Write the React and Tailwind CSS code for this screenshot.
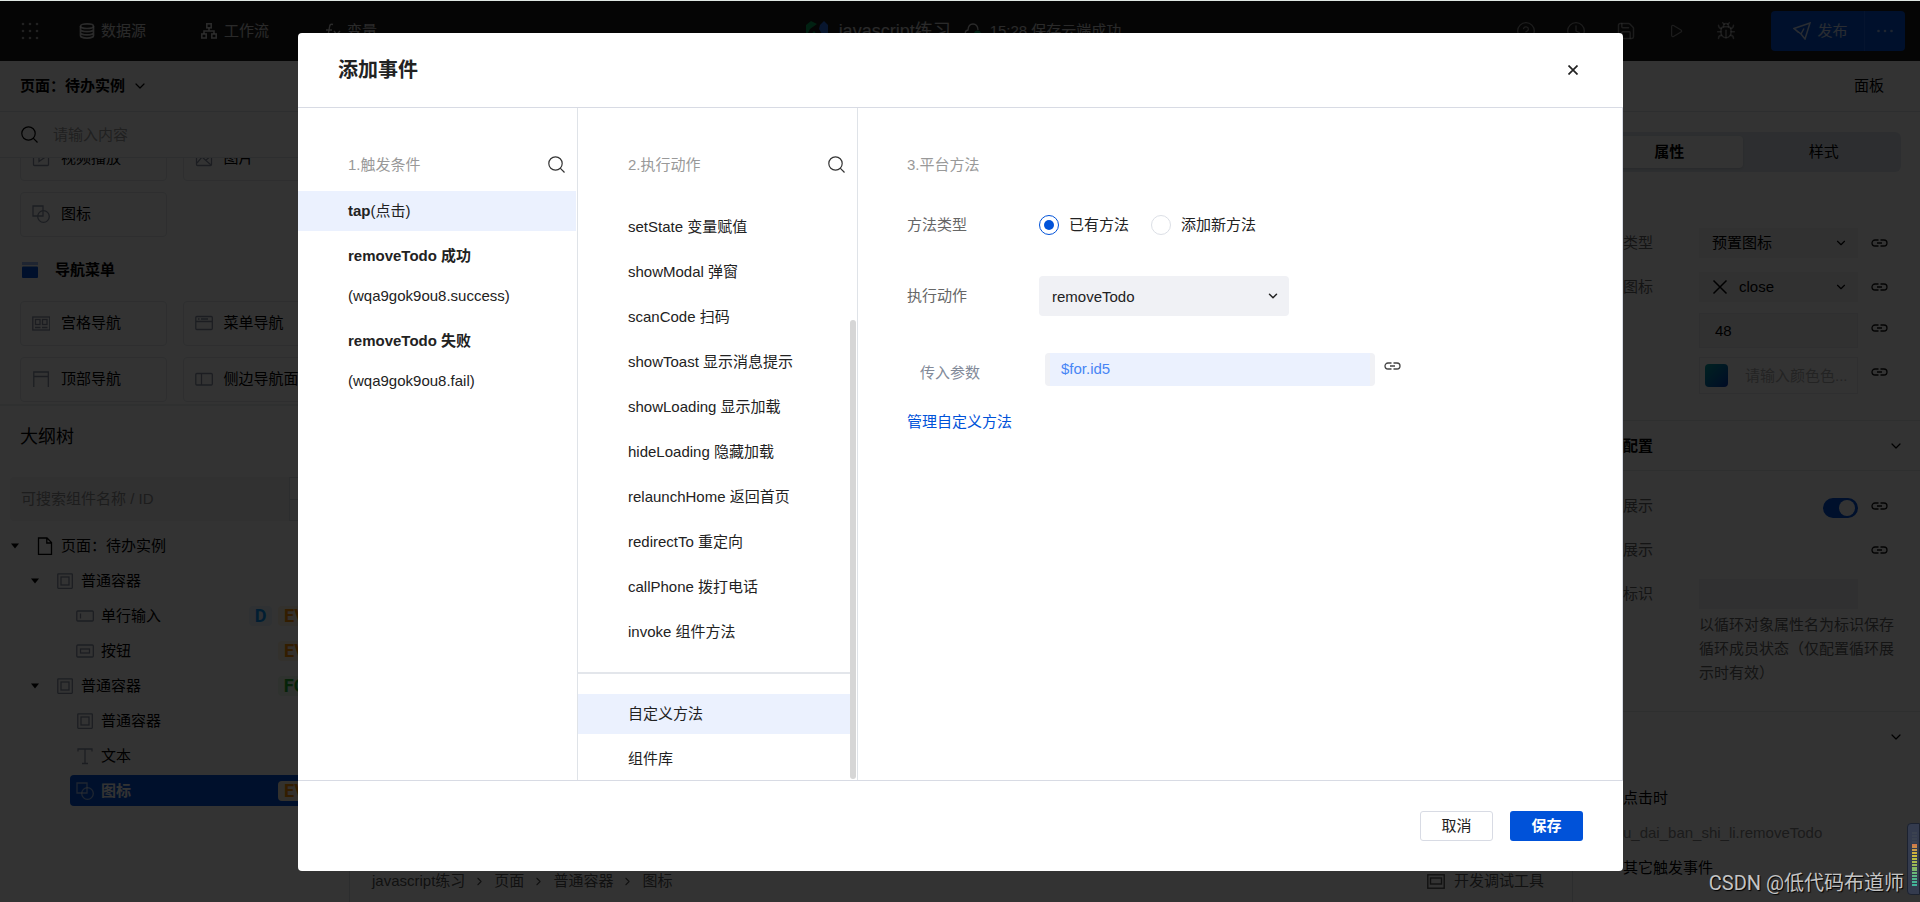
import React from "react";
import { Bug, ChevronDown, ChevronRight, CircleHelp, Clock, Play, Save } from "lucide-react";

function SearchIcon({ className }) {
  return (
    <svg viewBox="0 0 17 17" fill="none" stroke="currentColor" strokeWidth="1.2" className={className}>
      <circle cx="7.5" cy="7.5" r="6.7" />
      <path d="M12.2 12.2 16.5 16.5" />
    </svg>
  );
}

function LinkIcon({ className }) {
  return (
    <svg viewBox="0 0 17 8" fill="none" stroke="currentColor" strokeWidth="1.3" className={className}>
      <path d="M7.500 1H4a3 3 0 0 0 0 6h3.500M9.500 1H13a3 3 0 0 1 0 6H9.500M6 4h5" />
    </svg>
  );
}

function ShapesIcon({ className }) {
  return (
    <svg viewBox="0 0 18 18" fill="none" stroke="currentColor" strokeWidth="1.3" className={className}>
      <path d="M6 11H1V1h10v4" />
      <path d="M11 5v6H6" />
      <circle cx="11.5" cy="11.5" r="5.8" />
    </svg>
  );
}

const glyphs = {
  video: (
    <>
      <rect x="1.5" y="1.5" width="15" height="15" rx="1" />
      <path d="M7 5.5v7l5-3.5z" />
    </>
  ),
  image: (
    <>
      <rect x="1.5" y="1.5" width="15" height="15" rx="1" />
      <path d="m2 14 5-6 9 8M11 11l5-4" />
    </>
  ),
  grid: (
    <>
      <rect x="0.8" y="3" width="17" height="13" />
      <rect x="3.5" y="5.5" width="4.5" height="5" />
      <rect x="10.5" y="5.5" width="4.5" height="5" />
      <path d="M3 13.5h5.5M10 13.5h5.5" />
    </>
  ),
  menu: (
    <>
      <rect x="0.8" y="2.5" width="16.5" height="13" rx="1" />
      <path d="M1 7.5h16M3 5h1.5M6 5h7" />
    </>
  ),
  top: <path d="M1.8 17V2h14.5v15M2 6.5h14" />,
  side: (
    <>
      <rect x="0.8" y="3.5" width="16.5" height="11.5" rx="1" />
      <path d="M6.5 4v11" />
    </>
  ),
  page: <path d="M2.5 1h8.5l4.5 4.5V17.3h-13zM10.800 1v5h4.700" />,
  box: (
    <>
      <rect x="1.8" y="1.8" width="14.5" height="14.5" rx="0.5" />
      <rect x="5" y="5" width="8" height="8" />
    </>
  ),
  input: (
    <>
      <rect x="0.8" y="4" width="16.5" height="10" rx="1" />
      <path d="M4.500 6.500v5" />
    </>
  ),
  button: (
    <>
      <rect x="0.8" y="3" width="16.5" height="12" rx="1" />
      <rect x="4.5" y="7" width="9" height="4" />
    </>
  ),
  text: <path d="M2 4.500V2h14v2.500M9 2v14.500M6 16.500h6" />,
};

function Glyph({ name, className }) {
  if (name === "shapes") return <ShapesIcon className={className} />;
  return (
    <svg viewBox="0 0 18 18" fill="none" stroke="currentColor" strokeWidth="1.3" className={className}>
      {glyphs[name]}
    </svg>
  );
}

function TopBar() {
  return (
    <header className="flex h-[60px] shrink-0 items-center bg-[#191919] text-white/80">
      <nav className="flex flex-1 items-center pl-[21px]">
        <button type="button" aria-label="应用" className="mr-10">
          <svg viewBox="0 0 18 18" className="size-[18px] fill-white/60">
            {[2, 9, 16].map((y) => [2, 9, 16].map((x) => <circle key={`${x}-${y}`} cx={x} cy={y} r="1.3" />))}
          </svg>
        </button>
        <div className="flex items-center gap-[55px]">
          <a href="#data" className="flex items-center gap-1.5">
            <svg viewBox="0 0 16 16" fill="none" stroke="currentColor" strokeWidth="1.7" className="size-4">
              <ellipse cx="8" cy="3.2" rx="6.5" ry="2.3" />
              <path d="M1.500 3.200v9.600c0 1.200 3 2.300 6.500 2.300s6.500-1.100 6.500-2.300V3.200M1.500 6.500c0 1.200 3 2.200 6.500 2.200s6.500-1 6.500-2.200M1.500 9.700c0 1.200 3 2.200 6.500 2.200s6.500-1 6.500-2.200" />
            </svg>
            数据源
          </a>
          <a href="#flow" className="flex items-center gap-[7px]">
            <svg viewBox="0 0 16 16" fill="none" stroke="currentColor" strokeWidth="1.6" className="size-4">
              <rect x="5.8" y="0.8" width="4.4" height="4" />
              <rect x="0.8" y="11" width="4.4" height="4" />
              <rect x="10.8" y="11" width="4.4" height="4" />
              <path d="M8 5v3M3 11V8h10v3" />
            </svg>
            工作流
          </a>
          <a href="#vars" className="flex items-center gap-1.5">
            <svg viewBox="0 0 17 17" fill="none" stroke="currentColor" strokeWidth="1.4" className="size-[17px]">
              <path d="M9 1.500C6.500.5 5.800 2 5.500 4L4 13c-.3 2-1.500 3-3.500 2.500M2 7h6M10 8l5.500 7M16 8l-6.500 7" />
            </svg>
            变量
          </a>
        </div>
      </nav>
      <div className="flex items-center">
        <svg viewBox="0 0 24 20" className="mr-2.5 h-5 w-6">
          <path d="M1 4 6 0l6 3-7 5-4 8z" fill="#07a35a" />
          <path d="M15 4l4-4 4 4v12l-6-3-3-5z" fill="#2b6de8" />
          <path d="M3 17l6-7 6 7-6 3z" fill="#07a35a" />
        </svg>
        <span className="text-lg leading-6">javascript练习</span>
        <svg viewBox="0 0 18 16" fill="none" stroke="currentColor" strokeWidth="1.3" className="mr-2 ml-[13px] h-4 w-[18px]">
          <path d="M4.500 13.500C0 13 .5 7.500 4 7c.5-8 9.500-8 10 0" />
          <circle cx="13.5" cy="11" r="3.5" fill="#0aa56a" stroke="none" />
        </svg>
        <span>15:28 保存云端成功</span>
      </div>
      <div className="flex flex-1 items-center justify-end gap-[30px] pr-[15px] text-white/50">
        <button type="button" aria-label="帮助"><CircleHelp className="size-5" strokeWidth={1.6} /></button>
        <button type="button" aria-label="历史"><Clock className="size-5" strokeWidth={1.6} /></button>
        <button type="button" aria-label="保存应用"><Save className="size-5" strokeWidth={1.8} /></button>
        <button type="button" aria-label="预览"><Play className="size-5 scale-75" strokeWidth={2} /></button>
        <button type="button" aria-label="调试"><Bug className="size-5" strokeWidth={1.8} /></button>
        <div className="ml-[5px] flex h-10 rounded bg-[#0052d9] text-white/80">
          <button type="button" className="flex w-[94px] items-center justify-center gap-1.5 border-r border-[#1a67ea] pl-1.5">
            <svg viewBox="0 0 18 18" fill="none" stroke="currentColor" strokeWidth="1.5" className="size-[18px]">
              <path d="M1 6.500 17 1l-5 16-4-5zM5.500 10.500 1 6.500M8 12l3-5.500" />
            </svg>
            发布
          </button>
          <button type="button" aria-label="更多" className="flex w-10 items-center justify-center text-white/60">
            <svg viewBox="0 0 16 4" className="h-1 w-4 fill-current">
              <circle cx="1.5" cy="2" r="1.3" />
              <circle cx="8" cy="2" r="1.3" />
              <circle cx="14.5" cy="2" r="1.3" />
            </svg>
          </button>
        </div>
      </div>
    </header>
  );
}

function ComponentCard({ icon, label }) {
  return (
    <button type="button" className="flex h-[45px] items-center gap-[11px] overflow-hidden rounded border border-[#e3e6eb] pb-px pl-[11px] whitespace-nowrap">
      <Glyph name={icon} className="size-[18px] shrink-0 text-[#8a93a6]" />
      {label}
    </button>
  );
}

const tagStyles = {
  D: "w-[23px] bg-[#eaf4ff] text-[#0594fa]",
  EV: "w-[34px] bg-[#fff3e0] text-[#ff9000]",
  FO: "w-[34px] bg-[#e8f8ea] text-[#22b030]",
};

function Tag({ name }) {
  return (
    <span className={`flex h-5 items-center justify-center rounded font-[Roboto] text-lg leading-5 font-bold ${tagStyles[name]}`}>
      {name}
    </span>
  );
}

const tree = [
  { label: "页面：待办实例", icon: "page", indent: "pl-[10px]", open: true, tags: [] },
  { label: "普通容器", icon: "box", indent: "pl-[30px]", open: true, tags: [] },
  { label: "单行输入", icon: "input", indent: "pl-[50px]", tags: ["D", "EV"] },
  { label: "按钮", icon: "button", indent: "pl-[50px]", tags: ["EV"] },
  { label: "普通容器", icon: "box", indent: "pl-[30px]", open: true, tags: ["FO"] },
  { label: "普通容器", icon: "box", indent: "pl-[50px]", tags: [] },
  { label: "文本", icon: "text", indent: "pl-[50px]", tags: [] },
];

function LeftPanel() {
  return (
    <aside className="flex w-[350px] shrink-0 flex-col border-r border-[#dcdfe6] bg-white">
      <div className="flex h-[51px] shrink-0 items-center gap-[7px] border-b border-[#dfe3e8] px-5 font-bold">
        页面：待办实例
        <ChevronDown className="size-4" strokeWidth={1.8} />
      </div>
      <label className="flex h-[46px] shrink-0 items-center gap-[15px] border-b border-[#dfe3e8] px-[21px]">
        <SearchIcon className="size-[17px] shrink-0" />
        <input type="text" placeholder="请输入内容" className="min-w-0 flex-1 outline-none placeholder:text-[#a0a0a0]" />
      </label>
      <div className="flex h-[244px] shrink-0 flex-col justify-end overflow-hidden px-5">
        <div className="grid shrink-0 grid-cols-2 gap-x-4 gap-y-[11px]">
          <ComponentCard icon="video" label="视频播放" />
          <ComponentCard icon="image" label="图片" />
          <ComponentCard icon="shapes" label="图标" />
        </div>
        <div className="flex h-16 shrink-0 items-center gap-[17px] pt-0.5 pl-0.5 font-bold">
          <svg viewBox="0 0 16 16" className="size-4">
            <path d="M0 0h16v3H0z" fill="#9bb9f5" />
            <rect y="4.5" width="16" height="11.5" rx="1" fill="#0052d9" />
          </svg>
          导航菜单
        </div>
        <div className="grid shrink-0 grid-cols-2 gap-x-4 gap-y-[11px]">
          <ComponentCard icon="grid" label="宫格导航" />
          <ComponentCard icon="menu" label="菜单导航" />
          <ComponentCard icon="top" label="顶部导航" />
          <ComponentCard icon="side" label="侧边导航面板" />
        </div>
      </div>
      <div className="mt-0.5 h-0.5 shrink-0 bg-[#eaedf1]" />
      <h2 className="flex h-[61px] shrink-0 items-center px-5 text-lg">大纲树</h2>
      <div className="mt-2.5 mr-8 ml-2.5 flex h-11 shrink-0">
        <input
          type="text"
          aria-label="搜索组件"
          placeholder="可搜索组件名称 / ID"
          className="min-w-0 flex-1 rounded-l bg-[#f3f4f6] px-[11px] outline-none placeholder:text-[#8f8f8f]"
        />
        <div className="flex w-7 flex-col border border-[#dcdfe6]">
          <button type="button" aria-label="上一个" className="flex-1 border-b border-[#dcdfe6]" />
          <button type="button" aria-label="下一个" className="flex-1" />
        </div>
      </div>
      <ul className="mt-[7px]">
        {tree.map((node, i) => (
          <li key={i} className={`flex h-[35px] items-center pr-[37px] ${node.indent}`}>
            <span className="flex w-[25px]">
              {node.open && (
                <svg viewBox="0 0 10 6" className="h-1.5 w-2.5">
                  <path d="M1 .5h8L5 5.500z" />
                </svg>
              )}
            </span>
            <span className="mr-1.5 flex w-5 justify-center">
              <Glyph name={node.icon} className={node.icon === "page" ? "size-[18px]" : "size-[18px] text-[#8a93a6]"} />
            </span>
            {node.label}
            <span className="ml-auto flex gap-1.5">
              {node.tags.map((t) => (
                <Tag key={t} name={t} />
              ))}
            </span>
          </li>
        ))}
        <li className="mt-0.5 mr-2.5 ml-[70px] flex h-[31px] items-center rounded-sm bg-[#0052d9] pr-[27px] pl-[6px] font-bold text-white">
          <ShapesIcon className="mr-[7px] size-[18px] text-white/60" />
          图标
          <span className="ml-auto">
            <Tag name="EV" />
          </span>
        </li>
      </ul>
    </aside>
  );
}

function Canvas() {
  return (
    <main className="flex min-w-0 flex-1 flex-col justify-end bg-white">
      <footer className="flex h-[42px] items-center justify-between pr-7 pl-[22px] text-[#555]">
        <nav className="flex items-center gap-2">
          <a href="#app">javascript练习</a>
          <ChevronRight className="size-[13px]" strokeWidth={2} />
          <a href="#page">页面</a>
          <ChevronRight className="size-[13px]" strokeWidth={2} />
          <a href="#box">普通容器</a>
          <ChevronRight className="size-[13px]" strokeWidth={2} />
          <a href="#icon">图标</a>
        </nav>
        <button type="button" className="flex items-center gap-[9px]">
          <svg viewBox="0 0 18 15" fill="none" stroke="currentColor" strokeWidth="1.4" className="h-[15px] w-[18px]">
            <rect x="0.8" y="0.8" width="16.4" height="13.4" />
            <rect x="3.5" y="4" width="11" height="6" />
          </svg>
          开发调试工具
        </button>
      </footer>
    </main>
  );
}

function PropRow({ id, label, children, className, link = true }) {
  return (
    <div className={`flex items-start ${className}`}>
      <label htmlFor={id} className="w-[106px] pl-[30px] leading-[30px] text-[#666]">
        {label}
      </label>
      <div className="flex w-[159px] justify-end">{children}</div>
      {link && (
        <button type="button" aria-label="绑定" className="ml-[13px] flex h-[30px] items-center text-[#111]">
          <LinkIcon className="h-2 w-[17px]" />
        </button>
      )}
    </div>
  );
}

function RightPanel() {
  return (
    <aside className="flex w-[348px] shrink-0 flex-col border-l border-[#dcdfe6] bg-white">
      <div className="flex h-[51px] shrink-0 items-center justify-end border-b border-[#dfe3e8] pr-9">
        <button type="button">面板</button>
      </div>
      <div className="mt-5 mr-[19px] ml-[19px] flex h-10 shrink-0 rounded-md bg-[#dfe6ee]">
        <button type="button" className="m-1 flex-1 rounded-sm bg-white font-bold shadow">属性</button>
        <button type="button" className="m-1 flex-1">样式</button>
      </div>
      <div className="mt-14 flex flex-col pl-5">
        <PropRow id="icon-type" label="类型">
          <div className="relative flex-1">
            <select id="icon-type" className="h-[30px] w-full appearance-none bg-[#f3f4f6] pr-8 pl-[13px]">
              <option>预置图标</option>
            </select>
            <ChevronDown className="pointer-events-none absolute top-2 right-2.5 size-[14px]" strokeWidth={2} />
          </div>
        </PropRow>
        <PropRow id="icon-name" label="图标" className="mt-[14px]">
          <div className="relative flex-1">
            <select id="icon-name" className="h-[30px] w-full appearance-none bg-[#f3f4f6] pr-8 pl-10">
              <option>close</option>
            </select>
            <svg viewBox="0 0 16 16" fill="none" stroke="currentColor" strokeWidth="1.5" className="pointer-events-none absolute top-[7px] left-[13px] size-4">
              <path d="m1.500 1.500 13 13M14.500 1.500l-13 13" />
            </svg>
            <ChevronDown className="pointer-events-none absolute top-2 right-2.5 size-[14px]" strokeWidth={2} />
          </div>
        </PropRow>
        <PropRow className="mt-[11px]">
          <input type="text" aria-label="图标大小" defaultValue="48" className="h-[35px] w-full border border-[#e9ebef] bg-[#f3f4f6] px-[15px]" />
        </PropRow>
        <PropRow className="mt-[9px]">
          <div className="flex h-[37px] w-full items-center border border-[#e9ebef] pr-2 pl-[5px]">
            <span className="size-[23px] shrink-0 rounded-sm bg-linear-to-br from-[#00a5a0] to-[#0030b8]" />
            <input
              type="text"
              aria-label="图标颜色"
              placeholder="请输入颜色色..."
              className="ml-[17px] min-w-0 flex-1 outline-none placeholder:text-[#b0b0b0]"
            />
          </div>
        </PropRow>
      </div>
      <div className="mt-[26px] flex h-[51px] items-center justify-between border-y border-[#e6e8ec] pr-4 pl-[50px] font-bold">
        配置
        <ChevronDown className="size-4" strokeWidth={1.8} />
      </div>
      <div className="mt-5 flex flex-col pl-5">
        <PropRow id="cond" label="展示">
          <input
            id="cond"
            type="checkbox"
            role="switch"
            defaultChecked
            className="mt-[7px] h-5 w-[35px] appearance-none rounded-full bg-[#0052d9] p-0.5 before:mr-px before:ml-auto before:block before:size-4 before:rounded-full before:bg-white"
          />
        </PropRow>
        <PropRow label="展示" className="mt-[14px]" />
        <PropRow id="loop-key" label="标识" className="mt-[14px]" link={false}>
          <input id="loop-key" type="text" className="h-[30px] w-full bg-[#eef0f2]" />
        </PropRow>
        <p className="mt-1 ml-[106px] w-[200px] leading-6 text-[#666]">以循环对象属性名为标识保存循环成员状态（仅配置循环展示时有效）</p>
      </div>
      <div className="mt-[26px] flex h-[51px] items-center justify-end border-t border-[#e6e8ec] pr-4">
        <ChevronDown className="size-4" strokeWidth={1.8} />
      </div>
      <div className="mt-[18px] pl-[50px] leading-[35px]">
        <p>点击时</p>
        <p className="text-[#888]">u_dai_ban_shi_li.removeTodo</p>
        <p>其它触发事件</p>
      </div>
    </aside>
  );
}

const actions = [
  "setState 变量赋值",
  "showModal 弹窗",
  "scanCode 扫码",
  "showToast 显示消息提示",
  "showLoading 显示加载",
  "hideLoading 隐藏加载",
  "relaunchHome 返回首页",
  "redirectTo 重定向",
  "callPhone 拨打电话",
  "invoke 组件方法",
];

function ColumnHead({ children }) {
  return (
    <div className="flex h-[83px] shrink-0 items-end justify-between pr-3 pb-[14px] pl-[50px] text-[#999]">
      <h3 className="leading-6">{children}</h3>
      <button type="button" aria-label="搜索" className="pb-1 text-[#333]">
        <SearchIcon className="size-[17px]" />
      </button>
    </div>
  );
}

const radioClass =
  "size-5 appearance-none rounded-full border border-[#dcdfe6] bg-white checked:border-[#0052d9] checked:before:m-1 checked:before:block checked:before:size-2.5 checked:before:rounded-full checked:before:bg-[#0052d9]";

function EventDialog() {
  return (
    <section role="dialog" aria-modal="true" aria-labelledby="dialog-title" className="flex min-w-0 flex-1 flex-col rounded bg-white text-[#222]">
      <header className="flex h-[75px] shrink-0 items-center justify-between border-b border-[#d8dbe4] pr-[45px] pl-10">
        <h1 id="dialog-title" className="text-xl font-bold">添加事件</h1>
        <button type="button" aria-label="关闭">
          <svg viewBox="0 0 10 10" fill="none" stroke="currentColor" strokeWidth="1.7" className="size-2.5">
            <path d="m.5.5 9 9M9.500.5l-9 9" />
          </svg>
        </button>
      </header>
      <div className="flex min-h-0 flex-1 border-r border-b border-[#d8dbe4]">
        <div className="w-[280px] shrink-0 border-r border-[#dfe3e8]">
          <ColumnHead>1.触发条件</ColumnHead>
          <ul className="flex flex-col gap-[5px] leading-10">
            <li className="mr-px bg-[#ebf1fe] pl-[50px]"><b>tap</b>(点击)</li>
            <li className="pl-[50px]"><b className="block">removeTodo 成功</b>(wqa9gok9ou8.success)</li>
            <li className="pl-[50px]"><b className="block">removeTodo 失败</b>(wqa9gok9ou8.fail)</li>
          </ul>
        </div>
        <div className="flex w-[280px] shrink-0 flex-col border-r border-[#dfe3e8]">
          <ColumnHead>2.执行动作</ColumnHead>
          <div className="flex min-h-0 flex-1">
            <div className="min-w-0 flex-1 overflow-hidden leading-10">
              <ul className="mt-4 flex flex-col gap-[5px]">
                {actions.map((a) => (
                  <li key={a} className="pl-[50px]">{a}</li>
                ))}
              </ul>
              <hr className="mt-5 mb-5 border-t-2 border-[#e3e6eb]" />
              <ul className="flex flex-col gap-[5px]">
                <li className="bg-[#ebf1fe] pl-[50px]">自定义方法</li>
                <li className="pl-[50px]">组件库</li>
              </ul>
            </div>
            <div className="mr-px flex w-1.5 flex-col justify-end pb-px">
              <div className="h-[78%] rounded-full bg-[#d6d6d6]" />
            </div>
          </div>
        </div>
        <form className="min-w-0 flex-1 pl-[49px]">
          <h3 className="pt-[45px] leading-6 text-[#999]">3.平台方法</h3>
          <fieldset className="mt-9 flex h-6 items-center">
            <legend className="float-left w-[132px] text-[#666]">方法类型</legend>
            <label className="mr-[22px] flex items-center gap-2.5">
              <input type="radio" name="kind" defaultChecked className={radioClass} />
              已有方法
            </label>
            <label className="flex items-center gap-2.5">
              <input type="radio" name="kind" className={radioClass} />
              添加新方法
            </label>
          </fieldset>
          <div className="mt-[39px] flex items-center">
            <label htmlFor="action" className="w-[132px] text-[#666]">执行动作</label>
            <div className="relative w-[250px]">
              <select id="action" className="h-10 w-full appearance-none rounded bg-[#f0f1f5] pt-px pr-8 pl-[13px]">
                <option>removeTodo</option>
              </select>
              <ChevronDown className="pointer-events-none absolute top-[13px] right-[9px] size-[14px]" strokeWidth={2.5} />
            </div>
          </div>
          <div className="mt-[37px] flex items-start">
            <label htmlFor="param" className="w-[138px] pt-2 pl-[13px] leading-6 text-[#828a99]">传入参数</label>
            <div className="w-[330px] rounded bg-[#f0f1f5] px-[5px]">
              <input id="param" type="text" defaultValue="$for.id5" className="h-[33px] w-full bg-[#ebf1fe] px-[11px] pb-0.5 text-[#4785f5]" />
            </div>
            <button type="button" aria-label="绑定参数" className="ml-[9px] flex h-[26px] items-center text-[#444]">
              <LinkIcon className="h-2 w-[17px]" />
            </button>
          </div>
          <a href="#methods" className="mt-6 inline-block leading-6 text-[#0052d9]">管理自定义方法</a>
        </form>
      </div>
      <footer className="flex h-[90px] shrink-0 items-center justify-end gap-[17px] pr-10">
        <button type="button" className="h-[30px] w-[73px] rounded-[3px] border border-[#d8dbe4]">取消</button>
        <button type="button" className="h-[30px] w-[73px] rounded-[3px] bg-[#0052d9] font-bold text-white">保存</button>
      </footer>
    </section>
  );
}

const meterColors = [
  "#3b4250", "#3b4250", "#3b4250", "#3b4250", "#d07a4a", "#c98a4a", "#c89a48", "#cdb03c", "#cdbb3c", "#b9bd45",
  "#a9bb4c", "#9ab956", "#8ab962", "#7bb86c", "#6ab777", "#5cb684", "#4fb48d", "#46b494", "#40b49b",
];

export default function App() {
  return (
    <div className="relative flex h-screen flex-col overflow-hidden border-t border-[#dfe7e3] bg-white font-['Liberation_Sans','Noto_Sans_CJK_SC',sans-serif] text-[15px] leading-6 text-black">
      <TopBar />
      <div className="flex min-h-0 flex-1">
        <LeftPanel />
        <Canvas />
        <RightPanel />
      </div>
      <div className="absolute inset-0 flex bg-black/80 pt-8 pr-[297px] pb-[31px] pl-[298px]">
        <EventDialog />
      </div>
      <div className="pointer-events-none absolute right-0 bottom-[7px] flex items-end gap-[3px]">
        <span className="font-[Roboto,'Noto_Sans_CJK_SC',sans-serif] text-xl leading-6 text-[#c4c4c4] [text-shadow:1px_1px_1px_#000]">
          CSDN @低代码布道师
        </span>
        <div className="flex h-[72px] w-[13px] flex-col justify-between rounded-l border border-[#1c2230] bg-[#343b4e] py-2 pr-0.5 pl-1">
          {meterColors.map((c, i) => (
            <span key={i} className="h-0.5" style={{ backgroundColor: c }} />
          ))}
        </div>
      </div>
    </div>
  );
}
